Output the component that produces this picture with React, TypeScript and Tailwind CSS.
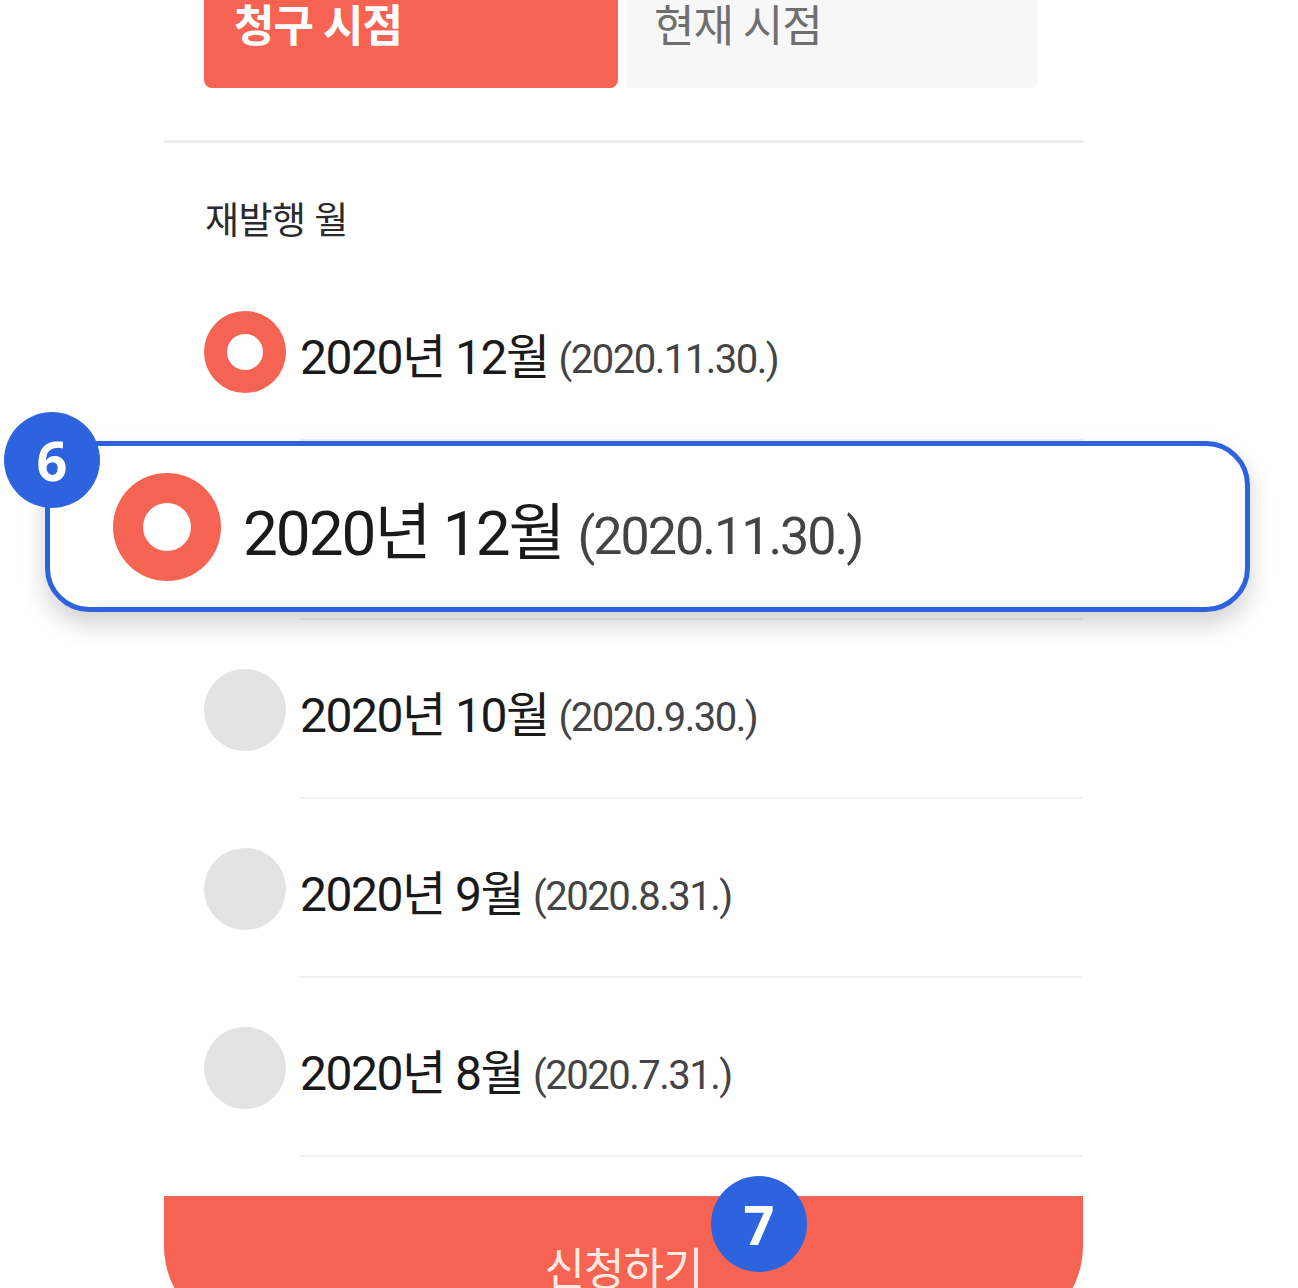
const MONTHS = [
  { label: "2020년 12월", date: "(2020.11.30.)", checked: true },
  { label: "2020년 11월", date: "(2020.10.31.)", checked: false },
  { label: "2020년 10월", date: "(2020.9.30.)", checked: false },
  { label: "2020년 9월", date: "(2020.8.31.)", checked: false },
  { label: "2020년 8월", date: "(2020.7.31.)", checked: false },
];

const FONT = "font-['Roboto','Noto_Sans_CJK_KR',sans-serif]";

function Radio({ checked, size }: { checked: boolean; size: "md" | "lg" }) {
  if (size === "lg") {
    return checked ? (
      <div className="w-[108px] h-[108px] rounded-full bg-[#f56453] flex items-center justify-center shrink-0">
        <div className="w-[48px] h-[48px] rounded-full bg-white" />
      </div>
    ) : (
      <div className="w-[108px] h-[108px] rounded-full bg-[#e3e3e3] shrink-0" />
    );
  }
  return checked ? (
    <div className="w-[82px] h-[82px] rounded-full bg-[#f56453] flex items-center justify-center shrink-0">
      <div className="w-[36px] h-[36px] rounded-full bg-white" />
    </div>
  ) : (
    <div className="w-[82px] h-[82px] rounded-full bg-[#e3e3e3] shrink-0" />
  );
}

function Badge({ n }: { n: number }) {
  return (
    <div className="w-[96px] h-[96px] rounded-full bg-[#2e63e0] flex items-center justify-center text-white text-[54px] font-bold font-['Open_Sans','Noto_Sans',sans-serif] leading-none">
      {n}
    </div>
  );
}

export default function App() {
  return (
    <div className={`relative w-[1298px] h-[1288px] overflow-hidden bg-white ${FONT}`}>
      <div className="w-[919px] ml-[164px] flex flex-col">
        {/* Tabs */}
        <div className="mt-[-50px] pl-[40px] pr-[45px] flex h-[138px]">
          <div className="w-[414px] bg-[#f76352] rounded-tl-[44px] rounded-bl-[8px] rounded-br-[8px] flex items-center pl-[30px] text-white text-[44px] font-bold tracking-[-1px]">
            <span className="mt-[16px]">청구 시점</span>
          </div>
          <div className="flex-1 ml-[8px] bg-[#f7f7f7] rounded-tr-[44px] rounded-br-[8px] flex items-center pl-[28px] text-[#6f6f6f] text-[44px] tracking-[-1px]">
            <span className="mt-[16px]">현재 시점</span>
          </div>
        </div>

        <div className="mt-[52px] h-[3px] bg-[#ececec]" />

        <div className="pt-[59px] pl-[41px] text-[37px] leading-[40px] text-[#2b2b2b] tracking-[-0.5px]">재발행 월</div>

        {/* Month list */}
        <div className="mt-[20px] pl-[40px] flex flex-col">
          {MONTHS.map((m) => (
            <div key={m.label} className="flex items-center">
              <Radio checked={m.checked} size="md" />
              <div className="ml-[14px] flex-1 h-[179px] border-b-2 border-[#f1f1f1] flex items-center gap-[10px] pt-[14px]">
                <span className="text-[48px] text-[#1a1a1a] tracking-[-1.5px]">{m.label}</span>
                <span className="text-[40px] text-[#444] tracking-[-1.5px] mt-[4px]">{m.date}</span>
              </div>
            </div>
          ))}
        </div>

        {/* Submit button */}
        <div className="mt-[39px] h-[140px] bg-[#f76352] border-t-2 border-[#e86a5e] rounded-b-[90px] flex items-center justify-center text-[44px] text-[#fdebe3] tracking-[-1px]">
          <span className="mt-[6px]">신청하기</span>
        </div>
      </div>

      {/* Callout 6: magnified selected row */}
      <div className="absolute left-[45px] top-[441px] w-[1205px] h-[171px] rounded-[44px] border-[5px] border-[#2e63e0] bg-white shadow-[0_12px_24px_rgba(0,0,0,0.18)] flex items-center pl-[63px]">
        <Radio checked size="lg" />
        <div className="ml-[22px] flex items-center gap-[14px] pt-[14px]">
          <span className="text-[62px] text-[#1a1a1a] tracking-[-2px]">2020년 12월</span>
          <span className="text-[52px] text-[#444] tracking-[-2px] mt-[6px]">(2020.11.30.)</span>
        </div>
      </div>
      <div className="absolute left-[4px] top-[412px]">
        <Badge n={6} />
      </div>

      {/* Callout 7 */}
      <div className="absolute left-[711px] top-[1176px]">
        <Badge n={7} />
      </div>
    </div>
  );
}
